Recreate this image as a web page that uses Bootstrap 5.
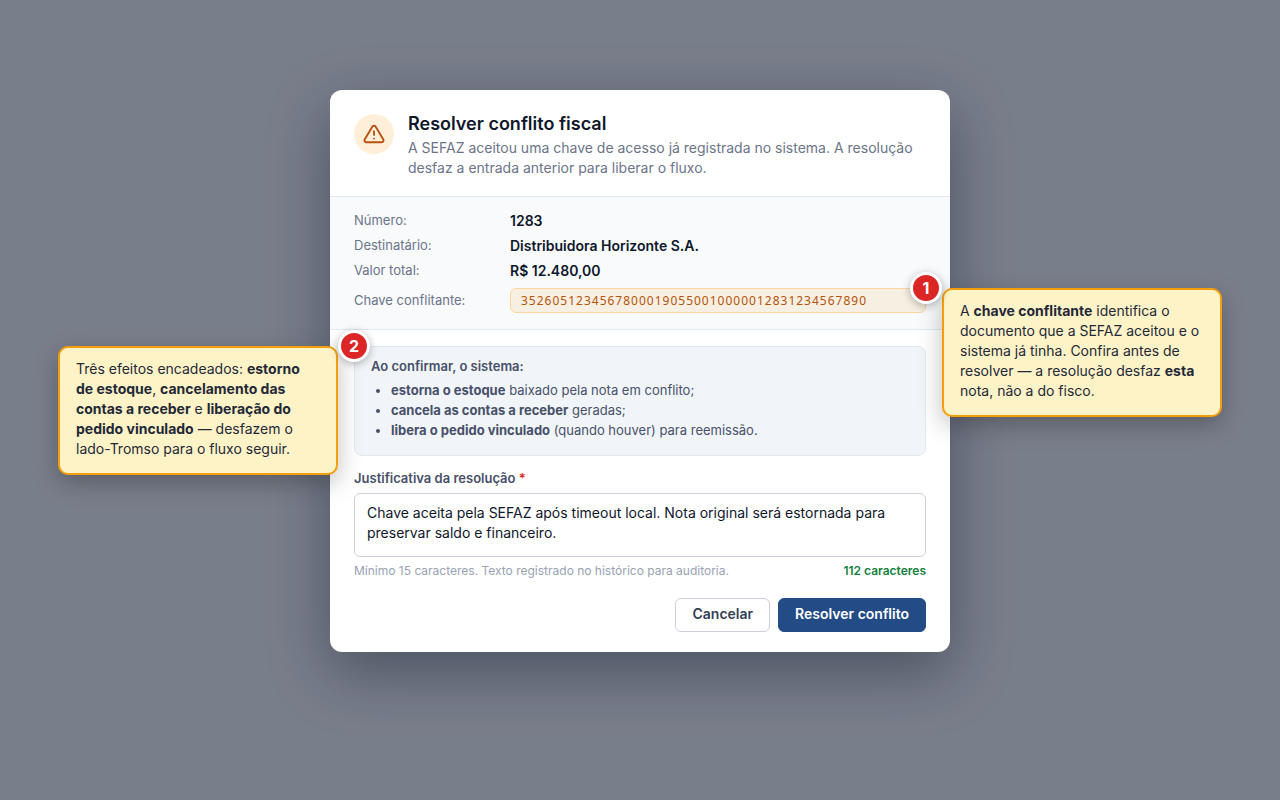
<!DOCTYPE html>
<html lang="pt-BR">
<head>
<meta charset="utf-8">
<meta name="viewport" content="width=device-width, initial-scale=1">
<title>Resolver conflito fiscal</title>
<link href="https://cdn.jsdelivr.net/npm/bootstrap@5.3.0/dist/css/bootstrap.min.css" rel="stylesheet">
<style>
  body { background: #797e8b; font-family: Inter, "Liberation Sans", sans-serif; font-size: 13px; line-height: 20px; color: #0f172a; }
  .page-wrap { padding: 90px 16px 60px; }
  .dialog-box { max-width: 620px; border-radius: 12px; background: #fff; box-shadow: 0 20px 60px rgba(15, 23, 42, .42); }
  strong { font-weight: 600; }

  .dialog-head { gap: 14px; padding: 24px 24px 18px; border-bottom: 1px solid #e2e8f0; }
  .warn-icon { width: 40px; height: 40px; background: #ffefd9; color: #b8500c; }
  .dialog-title { font-size: 18px; line-height: 20px; font-weight: 600; margin: 0 0 4px; }
  .dialog-sub { font-size: 14px; color: #6b7489; }

  .details { grid-template-columns: 140px minmax(0, 1fr); gap: 8px 16px; padding: 15px 24px 16px; background: #f8fafc; border-bottom: 1px solid #e2e8f0; line-height: 17px; }
  .details dt { font-weight: 400; color: #6b7489; }
  .details dd { font-size: 14px; font-weight: 600; }
  .details .access-key { margin-top: 1px; padding: 3px 10px; border: 1px solid #fbd7a0; border-radius: 6px; background: #f8efe3; color: #b45309; font: 400 12px/17px "Noto Sans", sans-serif; letter-spacing: 1px; overflow-wrap: anywhere; }

  .dialog-body { padding: 16px 24px 20px; }
  .effects { padding: 9px 16px 15px; margin-bottom: 12px; border: 1px solid #e2e8f0; border-radius: 8px; background: #f1f5f9; color: #475069; }
  .effects ul { padding-left: 20px; margin-top: 4px; }
  .effects li strong, .callout strong { font-weight: 700; }

  .reason-label { font-size: 13px; font-weight: 600; color: #475069; margin-bottom: 5px; }
  .required-mark { color: #dc2626; }
  .reason-input { height: 64px; padding: 9px 12px; border: 1px solid #cbd0d9; border-radius: 6px; font-size: 14px; line-height: 20px; color: #0f172a; resize: none; }
  .hint-row { margin-top: 4px; font-size: 12px; color: #98a2b3; }
  .hint-count { color: #15803d; }
  .dialog-actions { margin-top: 17px; }
  .dialog-actions .btn { padding: 6px 16px 8px; border-radius: 6px; font-size: 14px; line-height: 18px; font-weight: 600; }
  .btn-plain { --bs-btn-color: #334155; --bs-btn-bg: #fff; --bs-btn-border-color: #cbd0d9; --bs-btn-hover-bg: #f1f5f9; }
  .btn-brand { --bs-btn-color: #fff; --bs-btn-bg: #234b85; --bs-btn-border-color: #234b85; --bs-btn-hover-color: #fff; --bs-btn-hover-bg: #1c3d6e; }

  /* numbered notes anchored to the part they explain */
  .pin { position: absolute; top: -17px; width: 32px; height: 32px; border: 3px solid #fff; border-radius: 50%; background: #dc2626; color: #fff; font: 700 16px/26px Inter, sans-serif; letter-spacing: 0; text-align: center; box-shadow: 0 2px 8px rgba(0, 0, 0, .3); z-index: 3; }
  .pin-right { right: -17px; }
  .pin-left { left: -17px; }
  .callout { position: absolute; top: -1px; width: 280px; padding: 11px 16px 14px; border: 2px solid #f59e0b; border-radius: 10px; background: #fef3c7; color: #1f2937; font: 400 14px/20px Inter, sans-serif; letter-spacing: 0; box-shadow: 0 8px 24px rgba(0, 0, 0, .25); z-index: 2; }
  .callout-right { left: calc(100% + 17px); }
  .callout-left { right: calc(100% + 17px); }
  @media (max-width: 1199px) {
    .callout { position: static; width: auto; margin-top: 12px; }
  }
</style>
</head>
<body>
<main class="page-wrap min-vh-100">
  <section class="dialog-box mx-auto" role="dialog" aria-labelledby="dlg-title" aria-describedby="dlg-sub">
    <header class="dialog-head d-flex align-items-start">
      <span class="warn-icon rounded-circle d-flex align-items-center justify-content-center flex-shrink-0">
        <svg width="22" height="22" viewBox="0 0 24 24" fill="none" stroke="currentColor" stroke-width="2" stroke-linecap="round" stroke-linejoin="round" aria-hidden="true">
          <path d="M10.29 3.86 1.82 18a2 2 0 0 0 1.71 3h16.94a2 2 0 0 0 1.71-3L13.71 3.86a2 2 0 0 0-3.42 0z"/>
          <path d="M12 9v4M12 17h.01"/>
        </svg>
      </span>
      <div>
        <h1 class="dialog-title" id="dlg-title">Resolver conflito fiscal</h1>
        <p class="dialog-sub mb-0" id="dlg-sub">A SEFAZ aceitou uma chave de acesso já registrada no sistema. A resolução desfaz a entrada anterior para liberar o fluxo.</p>
      </div>
    </header>

    <dl class="details d-grid mb-0">
      <dt>Número:</dt><dd class="mb-0">1283</dd>
      <dt>Destinatário:</dt><dd class="mb-0">Distribuidora Horizonte S.A.</dd>
      <dt>Valor total:</dt><dd class="mb-0">R$ 12.480,00</dd>
      <dt class="align-self-center">Chave conflitante:</dt>
      <dd class="access-key position-relative mb-0">35260512345678000190550010000012831234567890
        <span class="pin pin-right">1</span>
        <aside class="callout callout-right">A <strong>chave conflitante</strong> identifica o documento que a SEFAZ aceitou e o sistema já tinha. Confira antes de resolver — a resolução desfaz <strong>esta</strong> nota, não a do fisco.</aside>
      </dd>
    </dl>

    <form class="dialog-body">
      <div class="effects position-relative">
        <strong>Ao confirmar, o sistema:</strong>
        <ul class="mb-0">
          <li><strong>estorna o estoque</strong> baixado pela nota em conflito;</li>
          <li><strong>cancela as contas a receber</strong> geradas;</li>
          <li><strong>libera o pedido vinculado</strong> (quando houver) para reemissão.</li>
        </ul>
        <span class="pin pin-left">2</span>
        <aside class="callout callout-left">Três efeitos encadeados: <strong>estorno de estoque</strong>, <strong>cancelamento das contas a receber</strong> e <strong>liberação do pedido vinculado</strong> — desfazem o lado-Tromso para o fluxo seguir.</aside>
      </div>
      <label class="reason-label d-block" for="reason">Justificativa da resolução <span class="required-mark">*</span></label>
      <textarea class="reason-input form-control" id="reason" required>Chave aceita pela SEFAZ após timeout local. Nota original será estornada para preservar saldo e financeiro.</textarea>
      <div class="hint-row d-flex justify-content-between">
        <span>Mínimo 15 caracteres. Texto registrado no histórico para auditoria.</span>
        <strong class="hint-count">112 caracteres</strong>
      </div>
      <div class="dialog-actions d-flex justify-content-end gap-2">
        <button type="button" class="btn btn-plain">Cancelar</button>
        <button type="submit" class="btn btn-brand">Resolver conflito</button>
      </div>
    </form>
  </section>
</main>
<script src="https://cdn.jsdelivr.net/npm/bootstrap@5.3.0/dist/js/bootstrap.bundle.min.js"></script>
</body>
</html>
